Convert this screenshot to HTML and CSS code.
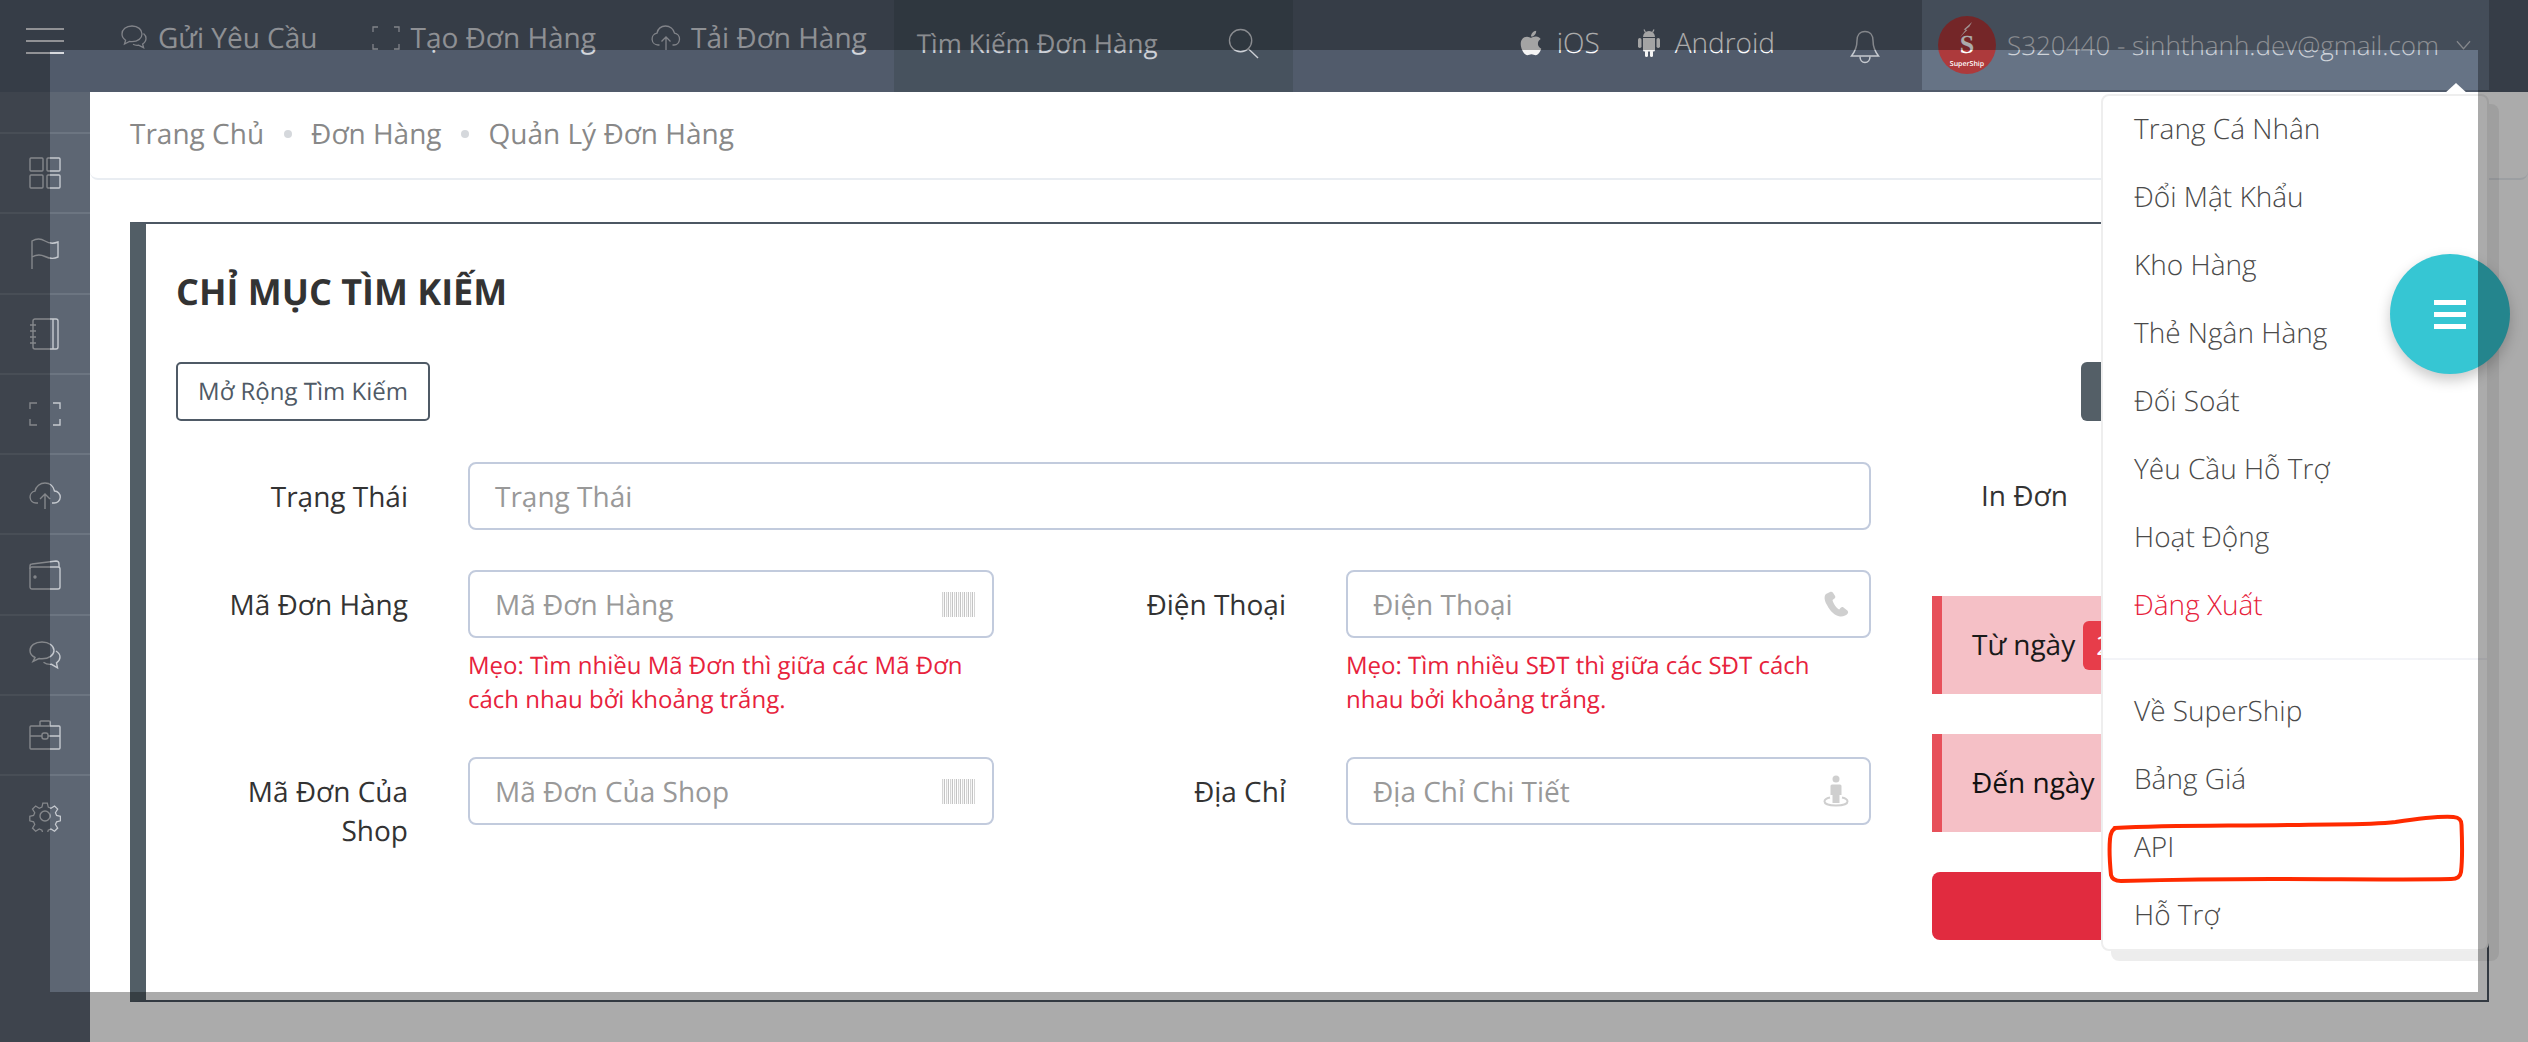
FILE: index.html
```html
<!DOCTYPE html>
<html lang="vi">
<head>
<meta charset="utf-8">
<title>Quản Lý Đơn Hàng</title>
<link rel="stylesheet" href="styles.css">
</head>
<body>
<div class="page">
  <header class="topbar">
    <div class="hamburger"><span></span><span></span><span></span></div>
    <nav class="topnav">
      <a class="topnav-item"><svg class="ico-nav" viewBox="0 0 28 28"><path d="M12 2C6 2 2 5.600 2 10c0 2.600 1.500 4.800 3.600 6.200L4.500 20l5-2.600c.8.200 1.700.300 2.500.300 6 0 10-3.600 10-7.800S18 2 12 2z"/><path d="M23.500 9.500c1.500 1.300 2.500 3 2.500 4.800 0 2.500-1.400 4.500-3.400 5.700l1 3.700-5-2.500c-2 .3-4 0-5.600-.9"/></svg>Gửi Yêu Cầu</a>
      <a class="topnav-item topnav-gap"><svg class="ico-nav" viewBox="0 0 28 28"><path d="M1 8V3h5M22 3h5v5M1 20v5h5M22 25h5v-5"/></svg>Tạo Đơn Hàng</a>
      <a class="topnav-item topnav-gap"><svg class="ico-nav ico-wide" viewBox="0 0 30 28"><path d="M8.500 21H7a6 6 0 0 1-1-11.900C7 4.500 10.500 2 14.500 2c4.500 0 8 3 9 7.100A6 6 0 0 1 23 21h-1.500"/><path d="M15 26V13M10.500 17.500 15 13l4.500 4.500"/></svg>Tải Đơn Hàng</a>
    </nav>
    <div class="topsearch">
      <span>Tìm Kiếm Đơn Hàng</span>
      <svg class="ico-search" viewBox="0 0 32 32"><circle cx="13" cy="13" r="11.500"/><path d="M21 21.500 31 31"/></svg>
    </div>
    <div class="apps">
      <a class="app"><svg class="ico-app" viewBox="0 0 384 512"><path d="M318.700 268.700c-.2-36.700 16.400-64.400 50-84.800-18.800-26.900-47.200-41.700-84.700-44.600-35.500-2.800-74.300 20.700-88.500 20.700-15 0-49.400-19.700-76.400-19.700C63.300 141.200 4 184.800 4 273.500q0 39.300 14.400 81.200c12.800 36.700 59 126.700 107.200 125.200 25.200-.6 43-17.900 75.800-17.900 31.800 0 48.300 17.900 76.400 17.900 48.600-.7 90.400-82.500 102.600-119.300-65.200-30.700-61.700-90-61.700-91.900zm-56.600-164.200c27.300-32.400 24.800-61.900 24-72.500-24.100 1.400-52 16.400-67.900 34.900-17.500 19.800-27.800 44.300-25.600 71.900 26.100 2 49.900-11.400 69.500-34.300z"/></svg>iOS</a>
      <a class="app"><svg class="ico-app" viewBox="0 0 24 28"><path d="M6 8a6 6 0 0 1 12 0zM6 9h12v12a1.500 1.500 0 0 1-1.500 1.500h-9A1.500 1.500 0 0 1 6 21z"/><rect x="1" y="9" width="3.500" height="10" rx="1.700"/><rect x="19.500" y="9" width="3.500" height="10" rx="1.700"/><rect x="8" y="21" width="3" height="7" rx="1.500"/><rect x="13" y="21" width="3" height="7" rx="1.500"/><path class="antenna" d="M8.500 3.500 7 .5M15.500 3.500 17 .5"/></svg>Android</a>
    </div>
    <svg class="ico-bell" viewBox="0 0 30 34"><path d="M15 1.500c-5.500 0-8 4-8 9 0 7-2 11-5.500 15.500h27C25 21.500 23 17.500 23 10.500c0-5-2.500-9-8-9z"/><path d="M10 26.500c0 3.500 2 6 5 6s5-2.500 5-6"/></svg>
    <div class="userbox">
      <div class="avatar"><svg class="avatar-bolt" viewBox="0 0 14 16"><path d="M13 0 4 8l2 .5L0 16l8-7.500-2-.5 4-3z"/></svg><span class="avatar-s">S</span><span class="avatar-name">SuperShip</span></div>
      <span class="user-name">S320440 - sinhthanh.dev@gmail.com</span>
      <svg class="ico-chevron" viewBox="0 0 16 10"><path d="M1 1l7 8 7-8"/></svg>
    </div>
  </header>

  <div class="main">
    <aside class="sidebar">
      <div class="side-item"><svg class="ico-side" viewBox="0 0 32 32"><rect x="1" y="1" width="13" height="13" rx="1"/><rect x="18" y="1" width="13" height="13" rx="1"/><rect x="1" y="18" width="13" height="13" rx="1"/><rect x="18" y="18" width="13" height="13" rx="1"/></svg></div>
      <div class="side-item"><svg class="ico-side" viewBox="0 0 32 32"><path d="M3 32V4c5-3 9-2.500 13 0s8 3 13 1v15c-5 2.500-9 1.500-13-.5s-8-2.500-13 .5"/></svg></div>
      <div class="side-item"><svg class="ico-side" viewBox="0 0 32 32"><rect x="4" y="1" width="25" height="30" rx="2"/><path d="M24 1v30M1 7h6M1 13h6M1 19h6M1 25h6"/></svg></div>
      <div class="side-item"><svg class="ico-side" viewBox="0 0 32 32"><path d="M1 11V5h7M24 5h7v6M1 21v6h7M24 27h7v-6"/></svg></div>
      <div class="side-item"><svg class="ico-side" viewBox="0 0 32 32"><path d="M9 25H7a6 6 0 0 1-1-11.900C7 8.500 11 5 16 5c5 0 8.500 3.500 9.500 8A6 6 0 0 1 25 25h-2"/><path d="M16 31V16M11 21l5-5 5 5"/></svg></div>
      <div class="side-item"><svg class="ico-side" viewBox="0 0 32 32"><path d="M1 10V7a2 2 0 0 1 2-2l24-3c2 0 3 1 3 3v3"/><rect x="1" y="8" width="30" height="22" rx="2"/><circle cx="6" cy="18" r="1"/></svg></div>
      <div class="side-item"><svg class="ico-side" viewBox="0 0 32 32"><path d="M13 3C6 3 1 6.600 1 11.500c0 3 2 5.500 5 7l-2 4 6-3c1 .2 2 .3 3 .3 7 0 12-3.600 12-8.300S20 3 13 3z"/><path d="M27 12c2.500 1.500 4 3.500 4 6 0 2.500-1.500 4.500-3.500 5.800l1 5-6-3.500c-3 .3-6-.5-8-2"/></svg></div>
      <div class="side-item"><svg class="ico-side" viewBox="0 0 32 32"><rect x="1" y="7" width="30" height="23" rx="1"/><path d="M11 7V3a1 1 0 0 1 1-1h8a1 1 0 0 1 1 1v4M1 17h12M19 17h12"/><rect x="13" y="14" width="6" height="6" rx="2"/></svg></div>
      <div class="side-item"><svg class="ico-side" viewBox="0 0 32 32"><circle cx="16" cy="16" r="5"/><path d="M13.500 1.500h5l1 4.500 3 1.300 4-2.500 3.500 3.500-2.500 4 1.300 3 4.200 1v5l-4.200 1-1.300 3 2.500 4-3.500 3.500-4-2.500-3 1.300-1 3.900h-5l-1-3.900-3-1.300-4 2.500-3.500-3.500 2.500-4-1.300-3-4.200-1v-5l4.200-1 1.300-3-2.500-4 3.500-3.500 4 2.500 3-1.300z" transform="translate(1.700 1.700) scale(.9)"/></svg></div>
    </aside>

    <main class="content">
      <div class="breadcrumb">
        <span>Trang Chủ</span><i class="crumb-dot"></i><span>Đơn Hàng</span><i class="crumb-dot"></i><span>Quản Lý Đơn Hàng</span>
      </div>

      <section class="card">
        <h1 class="card-title">CHỈ MỤC TÌM KIẾM</h1>
        <div class="actions">
          <button class="btn-outline">Mở Rộng Tìm Kiếm</button>
          <div class="btn-dark"></div>
        </div>
        <div class="search-layout">
          <div class="form-grid">
            <label class="form-label">Trạng Thái</label>
            <div class="field field-wide"><div class="input"><span class="placeholder">Trạng Thái</span></div></div>

            <label class="form-label">Mã Đơn Hàng</label>
            <div class="field">
              <div class="input"><span class="placeholder">Mã Đơn Hàng</span><i class="barcode"></i></div>
              <p class="tip">Mẹo: Tìm nhiều Mã Đơn thì giữa các Mã Đơn cách nhau bởi khoảng trắng.</p>
            </div>
            <label class="form-label">Điện Thoại</label>
            <div class="field">
              <div class="input"><span class="placeholder">Điện Thoại</span>
                <svg class="ico-input" viewBox="0 0 26 26"><path d="M7 1 3 3C1 5 1 9 4 14c3 6 8 11 13 11.500 3 .3 7-1 8-3.500.4-1-.2-2-1-2.700l-3.500-2.800c-1-.8-2-.5-2.800.3l-1.500 1.700c-2-.4-6-6-6.700-9.500l2-1.500c.8-.6 1-1.500.6-2.500L10 1.800C9.400.7 8 .5 7 1z"/></svg>
              </div>
              <p class="tip">Mẹo: Tìm nhiều SĐT thì giữa các SĐT cách nhau bởi khoảng trắng.</p>
            </div>

            <label class="form-label">Mã Đơn Của Shop</label>
            <div class="field"><div class="input"><span class="placeholder">Mã Đơn Của Shop</span><i class="barcode"></i></div></div>
            <label class="form-label">Địa Chỉ</label>
            <div class="field"><div class="input"><span class="placeholder">Địa Chỉ Chi Tiết</span>
              <svg class="ico-input" viewBox="0 0 26 32"><circle cx="13" cy="4" r="3.500"/><path d="M9 9.500h8a1.500 1.500 0 0 1 1.500 1.500v9h-2v8h-7v-8h-2v-9A1.500 1.500 0 0 1 9 9.500z"/><path class="person-ring" d="M7 22.500C3.500 23.300 1.500 24.800 1.500 26.500c0 2.500 5 4 11.500 4s11.500-1.500 11.500-4c0-1.700-2-3.200-5.500-4"/></svg>
            </div></div>
          </div>

          <div class="side-panel">
            <div class="print-row">In Đơn</div>
            <div class="date-box"><span>Từ ngày</span><b class="date-badge">2</b></div>
            <div class="date-box date-box-to"><span>Đến ngày</span></div>
            <div class="btn-red"></div>
          </div>
        </div>
      </section>
    </main>
  </div>

  <div class="dropdown">
    <ul class="menu-list">
      <li>Trang Cá Nhân</li>
      <li>Đổi Mật Khẩu</li>
      <li>Kho Hàng</li>
      <li>Thẻ Ngân Hàng</li>
      <li>Đối Soát</li>
      <li>Yêu Cầu Hỗ Trợ</li>
      <li>Hoạt Động</li>
      <li class="menu-danger">Đăng Xuất</li>
    </ul>
    <hr class="menu-divider">
    <ul class="menu-list">
      <li>Về SuperShip</li>
      <li>Bảng Giá</li>
      <li>API</li>
      <li>Hỗ Trợ</li>
    </ul>
  </div>

  <div class="fab"><span></span><span></span><span></span></div>
  <div class="capture-hole"></div>
  <svg class="annotation" viewBox="0 0 380 80"><path d="M14 16C70 13 120 14 190 13c50-1 80 0 105-3 20-3 45-6 58-5 6 .5 8 3 8 8 .5 12 1 35-.5 47-.7 5-4 7-10 7-50 1-110 0-180 0-50 0-110 1-150 2-6 0-9-2-10-6-1-10-2-25-1-36 .5-5 2-10 6-11z"/></svg>
</div>
</body>
</html>
```
FILE: styles.css
```css
* { box-sizing: border-box; }
html, body { margin: 0; padding: 0; height: 100%; overflow: hidden; background: #fff; }
body { font-family: "Open Sans", "Noto Sans", sans-serif; font-size: 28px; color: #333; text-rendering: geometricPrecision; }
ul { list-style: none; margin: 0; padding: 0; }
p, h1 { margin: 0; }
svg { display: block; flex: none; }

.page { position: relative; width: 2528px; height: 1042px; overflow: hidden; }

/* top bar */
.topbar { display: flex; align-items: stretch; height: 92px; background: #515b6b; color: #d4d7dd; }
.hamburger { display: flex; flex-direction: column; gap: 10px; width: 38px; margin: 28px 56px 0 26px; flex: none; }
.hamburger span { display: block; height: 2px; background: #d8dade; }
.topnav { display: flex; align-items: center; padding-bottom: 17px; margin-right: 27px; }
.topnav-item { display: flex; align-items: center; gap: 10px; white-space: nowrap; }
.topnav-gap { margin-left: 55px; }
.ico-nav { width: 28px; height: 28px; fill: none; stroke: currentColor; stroke-width: 1.300; opacity: .85; }
.ico-wide { width: 30px; }
.topsearch { display: flex; align-items: center; justify-content: space-between; width: 399px; padding: 0 34px 6px 23px; background: #47525e; font-size: 26px; color: #ced1d7; }
.ico-search { width: 31px; height: 31px; fill: none; stroke: currentColor; stroke-width: 1.400; }
.apps { display: flex; align-items: center; gap: 37px; margin-left: auto; padding-bottom: 6px; font-weight: 300; color: #fff; }
.app { display: flex; align-items: center; gap: 14px; }
.ico-app { width: 24px; height: 28px; fill: #f5f5f5; }
.antenna { fill: none; stroke: #f5f5f5; stroke-width: 1.200; }
.ico-bell { width: 30px; height: 34px; margin: 30px 42px 0 75px; fill: none; stroke: #c6cad0; stroke-width: 1.500; }
.userbox { display: flex; align-items: center; width: 567px; height: 90px; margin-right: 39px; padding-left: 16px; background: #667385; color: #d0d4da; font-weight: 300; }
.avatar { position: relative; width: 58px; height: 58px; border-radius: 50%; background: #ad3a3c; flex: none; }
.avatar-s { position: absolute; left: 0; right: 0; top: 16px; color: #fff; font-family: "Liberation Serif", serif; font-size: 26px; font-weight: 700; line-height: 26px; text-align: center; }
.avatar-bolt { position: absolute; left: 22px; top: 6px; width: 13px; height: 15px; fill: #fff; opacity: .8; }
.avatar-name { position: absolute; left: 0; right: 0; top: 44px; color: #fff; font-size: 7px; font-weight: 600; line-height: 9px; text-align: center; }
.user-name { margin-left: 11px; white-space: nowrap; font-size: 26px; }
.ico-chevron { width: 15px; height: 10px; margin-left: 17px; fill: none; stroke: #c6cad0; stroke-width: 1.300; }

/* sidebar */
.main { display: flex; height: 950px; }
.sidebar { width: 90px; flex: none; padding-top: 40px; background: #5d6673; }
.side-item { display: flex; align-items: center; justify-content: center; height: 80.300px; border-top: 2px solid #6c7581; }
.ico-side { width: 32px; height: 32px; fill: none; stroke: #c6cad0; stroke-width: 1.400; }

/* content */
.content { flex: 1; min-width: 0; background: #fff; }
.breadcrumb { display: flex; align-items: center; height: 88px; padding: 0 0 3px 40px; border-bottom: 2px solid #e9edf2; border-bottom-left-radius: 8px; border-bottom-right-radius: 8px; color: #888; }
.crumb-dot { width: 8px; height: 8px; margin: 0 19.500px; border-radius: 50%; background: #d5d8dc; }

.card { height: 780px; margin: 42px 39px 0 40px; padding: 46px 0 0 30px; border: 2px solid #4c5763; border-left: 16px solid #525e66; }
.card-title { font-size: 36px; font-weight: 700; line-height: 44px; color: #333; }
.actions { display: flex; justify-content: space-between; margin-top: 48px; }
.btn-outline { height: 59px; width: 254px; padding: 0; border: 2px solid #4f5a66; border-radius: 5px; background: #fff; color: #4f5a66; font: 400 24px "Open Sans", sans-serif; text-rendering: geometricPrecision; }
.btn-dark { width: 364px; height: 59px; margin-right: 42px; border-radius: 6px; background: #545f67; }

.search-layout { display: flex; gap: 61px; margin-top: 41px; }
.form-grid { display: grid; grid-template-columns: 232px 526px 232px 525px; grid-auto-rows: min-content; gap: 40px 60px; flex: none; }
.form-label { padding-top: 16px; line-height: 39px; text-align: right; color: #333; }
.field-wide { grid-column: 2 / 5; }
.input { display: flex; align-items: center; justify-content: space-between; height: 68px; padding: 0 20px 0 25px; border: 2px solid #c2cbdd; border-radius: 8px; background: #fff; }
.placeholder { padding-top: 2px; color: #999; }
.tip { margin-top: 11px; font-size: 24px; line-height: 34px; color: #e7223c; }
.barcode { display: block; width: 33px; height: 25px; margin-right: -3px; background: repeating-linear-gradient(90deg, #d5d5d5 0 1px, #f6f6f6 1px 2px, #c4c4c4 2px 3px, #fff 3px 4px); }
.ico-input { width: 26px; height: 32px; fill: #cfcfcf; }
.person-ring { fill: none; stroke: #cfcfcf; stroke-width: 2; }

.side-panel { flex: 1; min-width: 0; margin-right: 30px; }
.print-row { height: 68px; padding: 15px 0 0 49px; line-height: 39px; color: #333; }
.date-box { display: flex; align-items: center; gap: 8px; height: 98px; margin-top: 66px; padding-left: 30px; border-left: 10px solid #e7505a; background: #f5c0c6; color: #1a1a1a; }
.date-box-to { margin-top: 40px; color: #111; }
.date-badge { width: 200px; height: 49px; padding: 5px 0 0 13px; border-radius: 6px; background: #e73d4a; color: #fff; font-size: 26px; font-weight: 400; line-height: 39px; }
.btn-red { height: 68px; margin-top: 40px; border-radius: 8px; background: #e12b3f; }

/* user dropdown */
.dropdown { position: absolute; top: 94px; right: 39px; width: 388px; height: 857px; padding: 0; border: 2px solid #eeeeee; border-radius: 8px; background: #fff; box-shadow: 10px 10px 0 rgba(0, 0, 0, .07); color: #4a4a4a; font-weight: 300; }
.dropdown::before { content: ""; position: absolute; right: 19px; top: -13px; border-left: 12px solid transparent; border-right: 12px solid transparent; border-bottom: 11px solid #fff; }
.menu-list li { height: 68px; padding-left: 31px; line-height: 67px; }
.menu-danger { color: #e7223c; }
.menu-divider { height: 2px; margin: 18px 0 18px; border: 0; background: #f3f4f8; }

/* floating button */
.fab { position: absolute; left: 2390px; top: 254px; display: flex; flex-direction: column; align-items: center; justify-content: center; gap: 7px; width: 120px; height: 120px; border-radius: 50%; background: #36c6d3; box-shadow: 0 6px 14px rgba(0, 0, 0, .22); }
.fab span { display: block; width: 32px; height: 5px; background: #fff; }

/* screen-capture dim with a clear window */
.capture-hole { position: absolute; left: 50px; top: 50px; width: 2428px; height: 942px; box-shadow: 0 0 0 3000px rgba(0, 0, 0, .33); pointer-events: none; }

.annotation { position: absolute; left: 2097px; top: 812px; width: 387px; height: 80px; fill: none; stroke: #ff2a00; stroke-width: 4; stroke-linejoin: round; }
```
